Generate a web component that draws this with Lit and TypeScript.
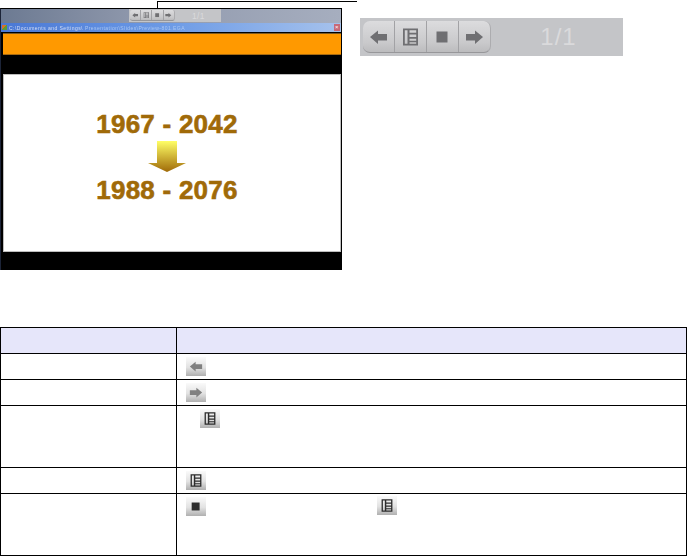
import { LitElement, html, css, svg } from "lit";
import { customElement, property } from "lit/decorators.js";

const ICONS: Record<string, unknown> = {
  left: svg`<polygon points="1,7 9,0.5 9,4 18,4 18,10.5 9,10.5 9,14 "/>`,
  right: svg`<polygon points="18,7 10,0.5 10,4 1,4 1,10.5 10,10.5 10,14 "/>`,
  stop: svg`<rect x="3.5" y="1.5" width="11" height="11"/>`,
  list: svg`<path fill-rule="evenodd" d="M2-1.5h15v17H2zM3.800 0.200v13.600h2.700V0.200zM8.500 0.200v2.600h6.700V0.200zM8.500 4.500v2.600h6.700V4.500zM8.500 8.800v1.900h6.700V8.800zM8.500 12.200v1.600h6.700v-1.600z"/>`,
};

function icon(name: string) {
  return html`<svg class="glyph" viewBox="0 -2 19 18">${ICONS[name]}</svg>`;
}

@customElement("nav-bar")
class NavBar extends LitElement {
  static styles = css`
    :host { display: block; }
    .bar { display: flex; align-items: center; width: 263px; height: 38px; padding-left: 3px; box-sizing: border-box; background: #c4c5c8; }
    .group { display: flex; width: 128px; height: 32px; border-radius: 7px; background: linear-gradient(#dcdcde, #c9c9cb 70%, #bcbcbe); border-bottom: 1px solid #97979a; border-right: 1px solid #acacaf; box-sizing: border-box; }
    .btn { flex: 1; display: flex; align-items: center; justify-content: center; border-left: 1px solid #a2a2a5; }
    .btn:first-child { border-left: none; }
    .glyph { width: 19px; height: 18px; fill: #6f6f72; }
    .count { flex: 1; text-align: center; padding-left: 3px; font: 24px "Liberation Sans", sans-serif; letter-spacing: 1px; color: #dadadc; }
  `;
  render() {
    return html`<div class="bar">
      <div class="group">
        <div class="btn">${icon("left")}</div>
        <div class="btn">${icon("list")}</div>
        <div class="btn">${icon("stop")}</div>
        <div class="btn">${icon("right")}</div>
      </div>
      <div class="count">1/1</div>
    </div>`;
  }
}

@customElement("key-icon")
class KeyIcon extends LitElement {
  @property() name = "left";
  static styles = css`
    :host { display: inline-block; vertical-align: top; width: 20px; height: 19px; }
    .k { display: flex; align-items: center; justify-content: center; width: 20px; height: 19px; background: linear-gradient(#fafafa, #e2e2e2 55%, #b0b0b0); }
    svg { width: 14px; height: 13px; fill: #808080; }
    .dark svg { fill: #2c2c2c; }
  `;
  render() {
    const dark = this.name === "list" || this.name === "stop";
    return html`<div class="k ${dark ? "dark" : ""}"><svg viewBox="0 -2 19 18">${ICONS[this.name]}</svg></div>`;
  }
}

@customElement("app-root")
class AppRoot extends LitElement {
  static styles = css`
    :host { display: block; position: relative; width: 687px; height: 556px; background: #fff; overflow: hidden; font-family: "Liberation Sans", Arial, sans-serif; }
    .top { display: flex; align-items: flex-start; padding: 8px 0 0 0; height: 327px; box-sizing: border-box; }
    .screen { width: 342px; height: 262px; box-sizing: border-box; background: #000; border-top: 1px solid #000; border-left: 1px solid #1c2438; display: flex; flex-direction: column; }
    .desk { flex: none; height: 14px; margin: 0 1px 0 0; display: flex; justify-content: flex-start; background: linear-gradient(90deg, #6c7a92, #8f98ac 40%, #a6aebf); padding-left: 128px; }
    .mini { zoom: 0.35; }
    .titlebar { flex: none; height: 9px; margin: 0 1px 0 0; display: flex; align-items: center; justify-content: space-between; padding: 0 1px; background: linear-gradient(90deg, #4a78d4, #6d9be6 50%, #a6c2ec); font-size: 5px; letter-spacing: 0.45px; color: #d4def5; white-space: nowrap; overflow: hidden; }
    .titletext { display: flex; align-items: center; gap: 2px; filter: blur(0.3px); }
    .appicon { width: 5px; height: 5px; background: linear-gradient(135deg, #d8702a 50%, #5a9a3a 50%); }
    .blur { color: #a9c6f2; filter: blur(0.6px); }
    .close { width: 6px; height: 7px; background: #c86a78; color: #fff; font-size: 6px; line-height: 7px; text-align: center; }
    .orange { flex: none; height: 22px; margin: 1px 1px 0 2px; box-sizing: border-box; background: #ff9900; border-top: 1px solid #7d5a22; border-bottom: 1px solid #a86a10; }
    .slide { flex: none; height: 178px; margin: 19px 1px 0 2px; box-sizing: border-box; background: #fff; border: 1px solid #bdbdbd; display: flex; flex-direction: column; align-items: center; padding: 35px 10px 0 0; }
    .year { font-size: 26px; font-weight: bold; line-height: 29px; letter-spacing: 0.25px; color: #a06a08; -webkit-text-stroke: 0.6px #a06a08; }
    .down { display: block; width: 40px; height: 32px; margin: 2px 0 3px; }
    .side { padding: 10px 0 0 18px; }
    .callout-h { position: absolute; left: 157px; top: 1px; width: 200px; height: 1px; background: #000; }
    .callout-v { position: absolute; left: 157px; top: 1px; width: 1px; height: 8px; background: #000; }
    table { border-collapse: collapse; table-layout: fixed; width: 687px; }
    td, th { border: 1px solid #000; padding: 3px 9px; vertical-align: top; box-sizing: border-box; font-weight: normal; text-align: left; }
    th { background: #e6e6fa; height: 26px; }
    .c1 { width: 176px; }
    .r26 { height: 26px; }
    .r62 { height: 62px; }
    .indent { padding-left: 23px; }
    .row { display: flex; align-items: flex-start; }
    .wide { margin: -1px 0 0 171px; }
  `;
  render() {
    return html`
      <div class="callout-h"></div>
      <div class="callout-v"></div>
      <div class="top">
        <div class="screen">
          <div class="desk"><nav-bar class="mini"></nav-bar></div>
          <div class="titlebar">
            <div class="titletext"><span class="appicon"></span><span>C:\\Documents and Settings\\</span><span class="blur">Presentation\\Slides\\Preview-801.EGA</span></div>
            <span class="close">×</span>
          </div>
          <div class="orange"></div>
          <div class="slide">
            <div class="year">1967 - 2042</div>
            <svg class="down" viewBox="0 0 40 32">
              <defs><linearGradient id="g" x1="0" y1="0" x2="0" y2="1"><stop offset="0" stop-color="#ffff66"/><stop offset="1" stop-color="#a06a08"/></linearGradient></defs>
              <polygon fill="url(#g)" points="10,0 30,0 30,22 39,22 20,31 1,22 10,22"/>
            </svg>
            <div class="year">1988 - 2076</div>
          </div>
        </div>
        <div class="side"><nav-bar></nav-bar></div>
      </div>
      <table>
        <tr><th class="c1"></th><th></th></tr>
        <tr class="r26"><td></td><td><key-icon name="left"></key-icon></td></tr>
        <tr class="r26"><td></td><td><key-icon name="right"></key-icon></td></tr>
        <tr class="r62"><td></td><td class="indent"><key-icon name="list"></key-icon></td></tr>
        <tr class="r26"><td></td><td><key-icon name="list"></key-icon></td></tr>
        <tr class="r62"><td></td><td><div class="row"><key-icon name="stop"></key-icon><key-icon class="wide" name="list"></key-icon></div></td></tr>
      </table>
    `;
  }
}
